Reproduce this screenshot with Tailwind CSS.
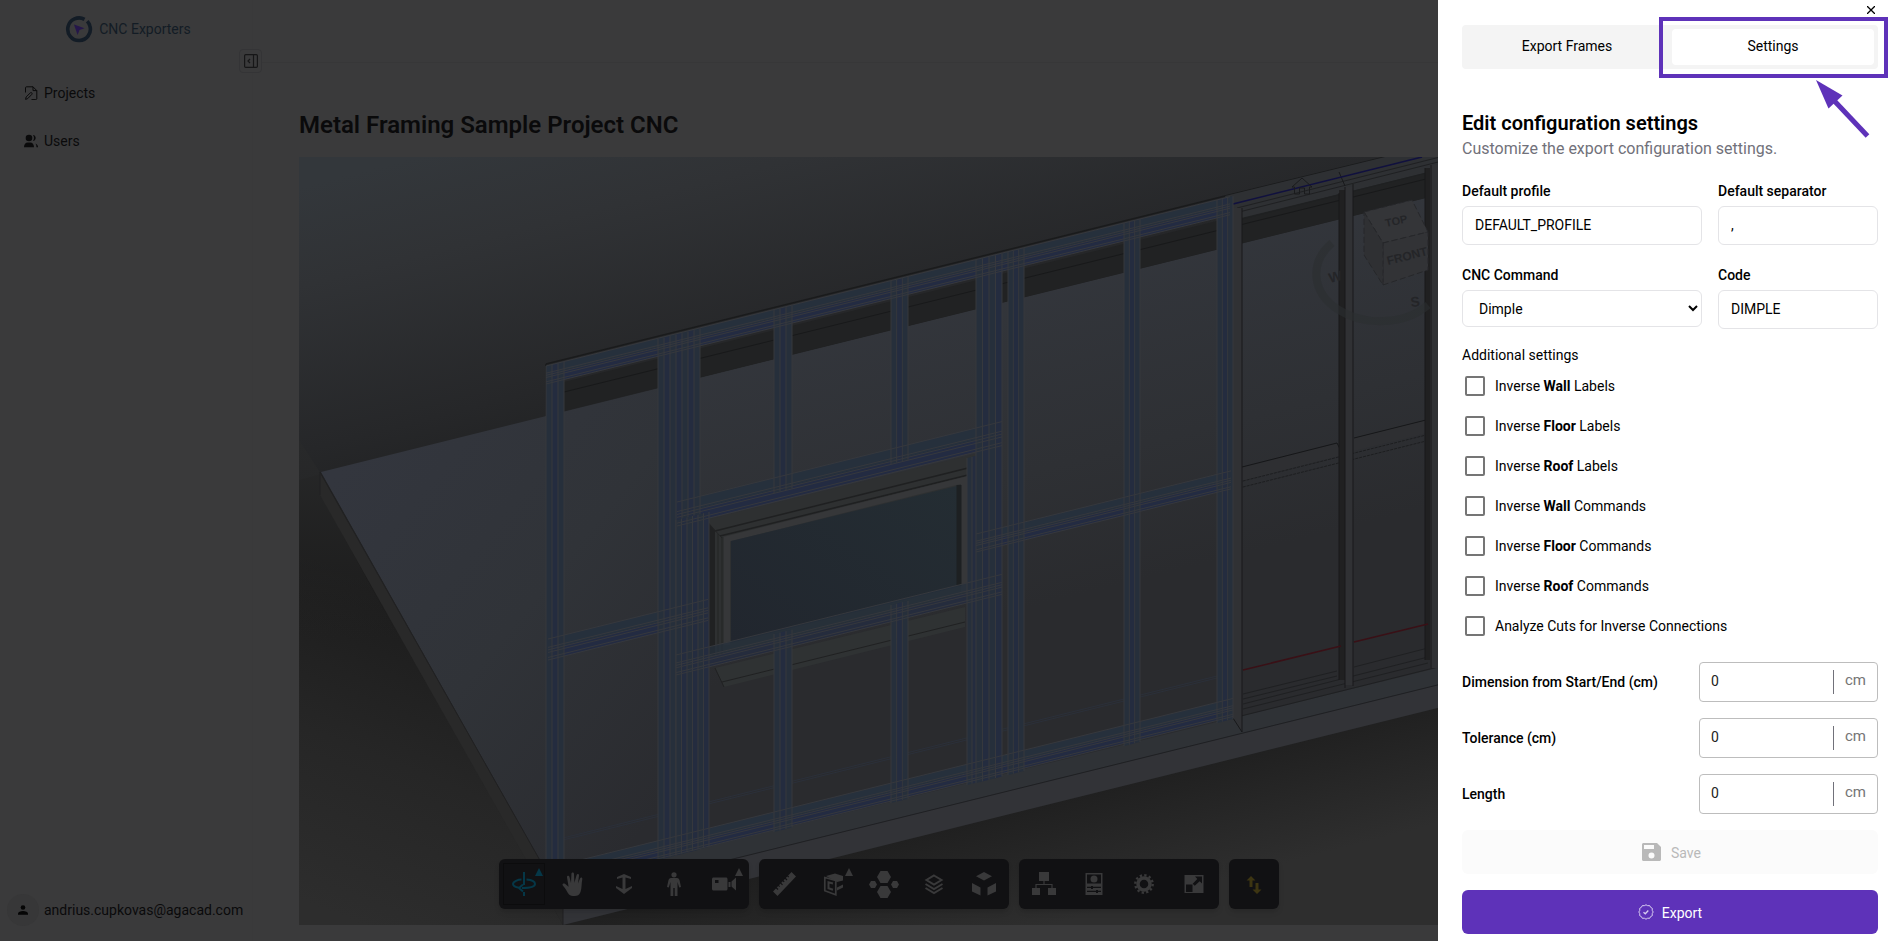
<!DOCTYPE html>
<html lang="en">
  <head>
    <meta charset="UTF-8" />
    <meta name="viewport" content="width=device-width, initial-scale=1.0" />
    <title>CNC Exporters</title>
    <script src="https://cdn.jsdelivr.net/npm/@tailwindcss/browser@4"></script>
  </head>
  <body class="bg-[#3a3a3b] font-[Roboto,sans-serif] text-sm text-[#0a0a0b]">
    <div class="flex h-screen overflow-hidden">
      <!-- Sidebar -->
      <aside class="relative flex w-[253px] shrink-0 flex-col border-r border-[#39393a]">
        <a href="#" class="flex h-[57px] items-center justify-center gap-1.5 pl-1 text-[#131c25]">
          <svg class="size-7" viewBox="0 0 28 28" fill="none">
            <path d="M19.500 4.300A11.300 11.300 0 1 0 24.900 11M22.200 6.200a11.300 11.300 0 0 1 2.700 4.800" stroke="#131c26" stroke-width="3.600" />
            <path d="M9 9.500l10.500 3.800-5 1.800-1.900 5z" fill="#25164a" />
          </svg>
          CNC Exporters
        </a>
        <button aria-label="Collapse sidebar" class="absolute top-[49px] -right-[10px] flex h-6 w-[23px] items-center justify-center rounded-sm border border-[#343436] bg-[#3a3a3b]">
          <svg class="size-3.5" viewBox="0 0 14 14" fill="none" stroke="#161617" stroke-width="1.200">
            <rect x="0.600" y="0.600" width="12.800" height="12.800" rx="1.200" />
            <path d="M9.500 1v12M6 5L4 7l2 2" />
          </svg>
        </button>
        <nav class="mt-3 flex flex-col">
          <a href="#" class="flex h-12 items-center gap-1.5 pl-6">
            <svg class="size-3.5" viewBox="0 0 14 14" fill="none" stroke="#0a0a0b">
              <path d="M1.500 6.500V1.800c0-.6.4-1 1-1H9l3.800 3.800v8c0 .6-.4 1-1 1H7.500M9 .8v3.800h3.800M1.600 13.400l.5-2.400 4.300-4.200c1-.8 2.300.4 1.500 1.500l-4.200 4.300z" />
            </svg>
            Projects
          </a>
          <a href="#" class="flex h-12 items-center gap-1.5 pl-6">
            <svg class="size-3.5" viewBox="0 0 14 14" fill="#0a0a0b">
              <circle cx="5" cy="4" r="3.300" />
              <path d="M0 13.300c0-3 1.600-4.800 3.800-4.800h2.400c2.200 0 3.800 1.800 3.800 4.800zM9 1c3.600.3 3.600 5.700 0 6 1.300-1.700 1.300-4.300 0-6zM11.500 9.500c1.600.7 2.500 2 2.500 3.800h-1.500c0-1.500-.3-2.700-1-3.800z" />
            </svg>
            Users
          </a>
        </nav>
        <div class="mt-auto mb-[15px] flex items-center gap-[5px] pl-[7px]">
          <span class="flex size-8 items-center justify-center rounded-full bg-[#373738]">
            <svg class="size-2.5" viewBox="0 0 10 10" fill="#050505">
              <circle cx="5" cy="2.500" r="2.300" />
              <path d="M0 9.800V8.500C0 7 2.500 6 5 6s5 1 5 2.500v1.300z" />
            </svg>
          </span>
          <span>andrius.cupkovas@agacad.com</span>
        </div>
      </aside>

      <main class="flex min-w-0 flex-1 flex-col">
        <div class="h-[63px] shrink-0 border-b border-[#373738]"></div>
        <h1 class="pt-[46px] pb-4 pl-[46px] text-2xl leading-8 font-semibold">Metal Framing Sample Project CNC</h1>

        <!-- 3D viewer -->
        <section class="relative mb-4 ml-[46px] min-h-0 max-w-[1179px] flex-1 overflow-hidden bg-[#262728]">
          <svg class="block h-full w-full" viewBox="299 157 1179 768" preserveAspectRatio="xMinYMin slice">
            <defs>
              <linearGradient id="sky" gradientUnits="userSpaceOnUse" x1="560" y1="120" x2="640" y2="430">
                <stop offset="0" stop-color="#33373b" />
                <stop offset="0.3" stop-color="#303235" />
                <stop offset="0.8" stop-color="#262729" />
                <stop offset="1" stop-color="#212223" />
              </linearGradient>
              <linearGradient id="ground" gradientUnits="userSpaceOnUse" x1="420" y1="600" x2="300" y2="900">
                <stop offset="0" stop-color="#1c1c1c" />
                <stop offset="0.500" stop-color="#262626" />
                <stop offset="1" stop-color="#2d2d2d" />
              </linearGradient>
              <linearGradient id="fade" x1="0" y1="0" x2="0" y2="1">
                <stop offset="0" stop-color="#28292a" />
                <stop offset="1" stop-color="#242424" stop-opacity="0" />
              </linearGradient>
              <linearGradient id="ground2" gradientUnits="userSpaceOnUse" x1="1000" y1="815" x2="1030" y2="930">
                <stop offset="0" stop-color="#202020" />
                <stop offset="1" stop-color="#2e2e2e" />
              </linearGradient>
              <linearGradient id="slab" gradientUnits="userSpaceOnUse" x1="340" y1="470" x2="700" y2="760">
                <stop offset="0" stop-color="#33363e" />
                <stop offset="0.500" stop-color="#303338" />
                <stop offset="1" stop-color="#2a2b2f" />
              </linearGradient>
              <linearGradient id="slab2" gradientUnits="userSpaceOnUse" x1="900" y1="300" x2="980" y2="620">
                <stop offset="0" stop-color="#33363c" />
                <stop offset="0.600" stop-color="#2e3034" />
                <stop offset="1" stop-color="#2a2b2e" />
              </linearGradient>
              <linearGradient id="glass" x1="0" y1="1" x2="1" y2="0">
                <stop offset="0" stop-color="#21262e" />
                <stop offset="1" stop-color="#242d33" />
              </linearGradient>
            </defs>

            <rect x="299" y="157" width="1179" height="768" fill="url(#sky)" />
            <path d="M299 480L321 474V495L563 925H299z" fill="url(#ground)" />
            <path d="M299 440L321 474V495L400 640H299z" fill="url(#fade)" />
            <path d="M563 925L1478 698V925z" fill="url(#ground2)" />
            <!-- slab -->
            <path d="M321 472L1478 185V680L563 901z" fill="url(#slab)" />
            <path d="M700 378L1478 185V680L700 868z" fill="url(#slab2)" />
            <path d="M563 882L1233 718L1478 658V675L563 901z" fill="#2f3236" />
            <path d="M563 901L1478 675V698L563 925z" fill="#323337" />
            <path d="M320 473V495L563 925V901z" fill="#292929" />
            <path d="M563 901L1478 675" stroke="#1f2023" fill="none" />
            <path d="M320 495V472L563 901V925" stroke="#212122" fill="none" />
            <!-- strip between the top chord and the slab -->
            <path d="M564 382L1225 219L1430 168V197L564 411z" fill="#212223" />
            <path d="M564 392L1430 178" stroke="#18191a" fill="none" />
            <path d="M546 364L1225 196L1385 157M546 364V416" stroke="#1a1b1c" stroke-width="1.500" fill="none" />

            <!-- window -->
            <path d="M709 519L975 454V600L709 663z" fill="#2e3031" />
            <path d="M709 523L715 530V655H709z" fill="#202122" />
            <path d="M715 531L968 468M720 536L968 475" stroke="#1f2021" stroke-width="1.500" fill="none" />
            <path d="M709 524L722 538M718 534V655M722 537V655" stroke="#232425" fill="none" />
            <path d="M727 645V539L964 480V592" stroke="#363739" stroke-width="6" fill="none" />
            <path d="M731 541L961 485V586L731 643z" fill="url(#glass)" />
            <path d="M959 485V586" stroke="#1d2022" stroke-width="5" />
            <path d="M715 668L965 607V627L724 687z" fill="#2f3233" />
            <path d="M722 682L965 622M715 668L724 687" stroke="#202122" fill="none" />

            <!-- unselected frames on the right -->
            <path d="M1225 196L1385 157H1478V160L1233 220z" fill="#2e3033" />
            <path d="M1235 213L1478 152M1237 208L1460 152M1242 219L1478 160" stroke="#1f2022" fill="none" />
            <path d="M1242 467L1337 443L1343 455L1242 481zM1354 438L1426 420L1432 432L1354 451z" fill="#2e2f32" />
            <path d="M1242 467L1337 443L1343 455M1354 438L1426 420L1432 432" stroke="#161719" fill="none" />
            <path d="M1235 483L1478 422M1235 489L1478 428" stroke="#1d1e20" stroke-dasharray="3 1" fill="none" />
            <path d="M1243 694L1337 671M1354 667L1428 648M1243 699L1337 676M1243 704L1428 657M1243 709L1428 663M1233 718L1478 657" stroke="#1f2022" fill="none" />
            <path d="M1233 208H1242V732L1233 718z" fill="#303134" />
            <path d="M1339 190H1345V680H1339zM1425 168H1430V660H1425z" fill="#202021" />
            <path d="M1345 187H1353V685H1345zM1430 165H1478V668H1430z" fill="#303134" />
            <path d="M1242 208V732M1233 718L1242 732M1339 193V680M1345 187V688M1353 184V686M1425 168V660M1431 165V668M1339 172L1345 186" stroke="#18191b" fill="none" />
            <path d="M1233 204L1422 157" stroke="#10103f" stroke-width="1.500" />
            <path d="M1243 670L1341 646M1354 642L1428 624" stroke="#3a1016" stroke-width="1.500" />

            <!-- selected frame, filled in by the script below -->
            <g id="frame"></g>

            <!-- view cube -->
            <path d="M1332 243A62 46 0 0 0 1428 305" stroke="#2c2e31" stroke-width="8" stroke-opacity="0.600" fill="none" />
            <g stroke="#26272a" stroke-dasharray="6 3">
              <path d="M1364 212L1412 200L1428 232L1383 243z" fill="#343538" />
              <path d="M1383 243L1428 232V270L1383 285z" fill="#323336" />
              <path d="M1364 212L1383 243V285L1364 255z" fill="#2f3033" />
            </g>
            <g fill="#242528" font-family="Liberation Sans, sans-serif" font-weight="bold">
              <text transform="translate(1386 227) rotate(-12)" font-size="11">TOP</text>
              <text transform="translate(1388 265) rotate(-14)" font-size="12">FRONT</text>
              <text transform="translate(1330 283) rotate(-14)" font-size="14">W</text>
              <text transform="translate(1411 307) rotate(-6)" font-size="14">S</text>
            </g>
            <path d="M1302 178l10 9h-2.500v7h-5v-6h-5v6h-5v-7h-2.500z" stroke="#1a1b1d" fill="none" />
          </svg>

          <!-- Viewer toolbar -->
          <div class="absolute inset-x-0 bottom-4 flex justify-center gap-2.5 text-[#39393a]">
            <div class="flex rounded-md bg-[#111113] shadow-md">
              <button aria-label="Orbit" class="relative flex size-[50px] items-center justify-center text-[#053747]">
                <span class="absolute inset-1 border border-[#0c0c0d]"></span>
                <svg class="size-6" viewBox="0 0 24 24" fill="none" stroke="currentColor" stroke-width="2">
                  <path d="M12 0v13M12 20v4M7 15.800C3 15 1 13.500 1 12c0-2.500 5-4.500 8.500-4.500M14.500 7.500C19 7.800 23 9.500 23 12s-5 4-13 4M11 12.500l-4 3.500 4 3.500" />
                </svg>
                <svg class="absolute top-[9px] right-[6px] size-2" viewBox="0 0 8 8"><path d="M4 0l4 8H0z" fill="currentColor" /></svg>
              </button>
              <button aria-label="Pan" class="flex size-[50px] items-center justify-center">
                <svg class="size-6" viewBox="0 0 24 24" fill="currentColor">
                  <path d="M7 22.500C5 20 3.500 16 .8 13.400c-1-1.400.7-2.600 2.200-1.600l3.600 3L5 5.500c-.3-1.900 2-2.300 2.500-.5L9 11l.4-9c.1-1.900 2.500-1.900 2.600 0l.4 8.800L14.600 3c.4-1.700 2.600-1.300 2.400.5L16 11.500l2-5c.7-1.600 2.600-.9 2.300.7-1 4.800-.3 8.800-1.800 12.800-1.200 3.200-3 4-6 4-2.300 0-4.200-.2-5.500-1.500z" />
                </svg>
              </button>
              <button aria-label="Zoom" class="flex size-[50px] items-center justify-center">
                <svg class="size-6" viewBox="0 0 24 24" fill="currentColor">
                  <path d="M12 2l7 3v2L13.500 5.500v11.500L20 14v2l-8 6-8-6v-2l6.500 3V5.500L5 7V5z" />
                </svg>
              </button>
              <button aria-label="First person" class="flex size-[50px] items-center justify-center">
                <svg class="size-6" viewBox="0 0 24 24" fill="currentColor">
                  <circle cx="12" cy="2.800" r="2.600" />
                  <path d="M9 6h6c1.500 0 2.200 1 2.600 2.400L19 15l-1.800.5L15.500 10v14h-2.800v-8h-1.400v8H8.500V10l-1.700 5.500L5 15l1.400-6.600C6.800 7 7.500 6 9 6z" />
                </svg>
              </button>
              <button aria-label="Camera" class="relative flex size-[50px] items-center justify-center">
                <svg class="size-6" viewBox="0 0 24 24">
                  <path d="M1.500 5.500h12.500c.8 0 1.500.7 1.500 1.500v10c0 .8-.7 1.500-1.500 1.500H1.500C.7 18.500 0 17.800 0 17V7c0-.8.7-1.500 1.500-1.500zM16.500 10h2v5h-2zM19.500 9.500L24 5.500v13l-4.500-4z" fill="currentColor" />
                  <path d="M3 8h3.500v3H3z" fill="#111113" />
                </svg>
                <svg class="absolute top-[9px] right-[6px] size-2" viewBox="0 0 8 8"><path d="M4 0l4 8H0z" fill="currentColor" /></svg>
              </button>
            </div>
            <div class="flex rounded-md bg-[#111113] shadow-md">
              <button aria-label="Measure" class="flex size-[50px] items-center justify-center">
                <svg class="size-6" viewBox="0 0 24 24">
                  <path d="M19.500 0L24 4.500 5.500 24 1 19.500z" fill="currentColor" />
                  <path d="M4 15.500l2 2M6.200 13.200l1.400 1.400M8.500 10.800l2 2M10.800 8.500l1.400 1.400M13 6l2 2M15.300 3.700l1.400 1.400" stroke="#111113" stroke-width="1.200" />
                </svg>
              </button>
              <button aria-label="Section" class="relative flex size-[50px] items-center justify-center">
                <svg class="size-6" viewBox="0 0 24 24" fill="none" stroke="currentColor" stroke-width="1.700">
                  <path d="M2.800 5.500l11 3v14.200l-11-4z" />
                  <path d="M11 11.500l-4.500-1.200v6l4.500 1.500" stroke-width="2" />
                  <path d="M4 4l9-2.500L21 4v4.500L15 10zM15 15.500l6-3v3l-6 3z" fill="currentColor" stroke="none" />
                </svg>
                <svg class="absolute top-[9px] right-[6px] size-2" viewBox="0 0 8 8"><path d="M4 0l4 8H0z" fill="currentColor" /></svg>
              </button>
              <button aria-label="Explode" class="flex size-[50px] items-center justify-center">
                <svg class="h-7 w-8" viewBox="0 0 32 28" fill="currentColor">
                  <path d="M12.500 1h7l3.500 6-3.500 6h-7L9 7zM12.500 16h7l3.500 6-3.500 6h-7L9 22zM3 11h4l2 3.500L7 18H3l-2-3.500zM25 11h4l2 3.500-2 3.500h-4l-2-3.500z" />
                </svg>
              </button>
              <button aria-label="Layers" class="flex size-[50px] items-center justify-center">
                <svg class="size-6" viewBox="0 0 24 24" fill="none" stroke="currentColor" stroke-width="2">
                  <path d="M12 3.500l7.500 4.500L12 12.500 4.500 8zM3.500 12l8.500 5 8.500-5M3.500 16l8.500 5 8.500-5" />
                </svg>
              </button>
              <button aria-label="Model browser" class="flex size-[50px] items-center justify-center">
                <svg class="size-6" viewBox="0 0 24 24" fill="currentColor">
                  <path d="M12 0l8 4.200-8 4.200-8-4.200zM0 11l8.500 4.500v8L0 19.500zM24 11l-8.500 4.500v8L24 19.500z" />
                </svg>
              </button>
            </div>
            <div class="flex rounded-md bg-[#111113] shadow-md">
              <button aria-label="Structure" class="flex size-[50px] items-center justify-center">
                <svg class="size-6" viewBox="0 0 24 24">
                  <path d="M7 0h10v9H7zM0 16h8v7H0zM16 16h8v7h-8z" fill="currentColor" />
                  <path d="M12 9v3.500M4 16v-3.500h16V16" fill="none" stroke="currentColor" stroke-width="1.200" />
                </svg>
              </button>
              <button aria-label="Properties" class="flex size-[50px] items-center justify-center">
                <svg class="size-6" viewBox="0 0 24 24">
                  <path d="M3.500 1h17v22h-17z" fill="currentColor" />
                  <path d="M5 2.500h14v9H5z" fill="#111113" />
                  <path d="M5 15.300h14M5 19.300h14" stroke="#111113" stroke-width="1.200" />
                  <circle cx="12" cy="7" r="3.500" fill="currentColor" />
                  <path d="M10 14v3M15 18v3" stroke="#111113" stroke-width="2" />
                </svg>
              </button>
              <button aria-label="Viewer settings" class="flex size-[50px] items-center justify-center">
                <svg class="size-6" viewBox="0 0 24 24" fill="none" stroke="currentColor">
                  <circle cx="12" cy="12" r="6" stroke-width="3.500" />
                  <circle cx="12" cy="12" r="8.700" stroke-width="2.400" stroke-dasharray="2.300 2.255" />
                </svg>
              </button>
              <button aria-label="Fullscreen" class="flex size-[50px] items-center justify-center">
                <svg class="size-6" viewBox="0 0 24 24">
                  <path d="M2.500 3h19v18h-19z" fill="currentColor" />
                  <path d="M4 12.500h6.500V20H4zM13 4.500h7v7l-2.300-2.300-5 4.500-2-2 4.600-4.800z" fill="#111113" />
                </svg>
              </button>
            </div>
            <div class="flex rounded-md bg-[#111113] shadow-md">
              <button aria-label="Swap" class="flex size-[50px] items-center justify-center text-[#3d3512]">
                <svg class="size-5" viewBox="0 0 20 20" fill="currentColor">
                  <path d="M7 2l4.500 4.500h-3V13h-3V6.500h-3zM13 20l-4.500-4.500h3V9h3v6.500h3z" />
                </svg>
              </button>
            </div>
          </div>
        </section>
      </main>
    </div>

    <!-- Export drawer -->
    <aside class="fixed inset-y-0 right-0 w-[464px] overflow-hidden bg-white px-6 pt-[25px] text-black">
      <button aria-label="Close" class="absolute top-1 right-[25px] flex size-3 items-center justify-center">
        <svg class="size-2" viewBox="0 0 8 8" fill="none" stroke="#000" stroke-width="1.300"><path d="M0 0l8 8M8 0L0 8" /></svg>
      </button>
      <div role="tablist" class="grid h-11 grid-cols-2 gap-1 rounded bg-[#f4f4f4] p-1">
        <button role="tab" aria-selected="false" class="rounded pb-0.5">Export Frames</button>
        <button role="tab" aria-selected="true" class="rounded bg-white pb-0.5">Settings</button>
      </div>

      <!-- Callout -->
      <div class="pointer-events-none absolute top-[17px] right-[14px] h-[61px] w-[229px] border-4 border-[#5e32b9]"></div>
      <svg class="pointer-events-none absolute top-[79px] right-[32px] h-[60px] w-[56px]" viewBox="0 0 56 60">
        <path d="M2 1l26.500 15.500-14 13z" fill="#5e32b9" />
        <path d="M20 21.500L53.500 57" stroke="#5e32b9" stroke-width="5" />
      </svg>

      <form>
        <h2 class="mt-10 text-xl leading-7 font-semibold">Edit configuration settings</h2>
        <p class="text-base leading-6 text-[#71717a]">Customize the export configuration settings.</p>

        <div class="mt-5 grid grid-cols-[3fr_2fr] items-start gap-x-4 gap-y-5">
          <div class="flex flex-col gap-[5px]">
            <label for="profile" class="leading-5 font-medium">Default profile</label>
            <input id="profile" type="text" value="DEFAULT_PROFILE" class="h-[39px] w-full rounded-md border border-[#e4e4e7] px-3 pb-0.5" />
          </div>
          <div class="flex flex-col gap-[5px]">
            <label for="separator" class="leading-5 font-medium">Default separator</label>
            <input id="separator" type="text" value="," class="h-[39px] w-full rounded-md border border-[#e4e4e7] px-3 pb-0.5" />
          </div>
          <div class="flex flex-col gap-[5px]">
            <label for="command" class="leading-5 font-medium">CNC Command</label>
            <select id="command" class="h-[37px] w-full rounded-md border border-[#e4e4e7] bg-white pr-px pl-3">
              <option>Dimple</option>
            </select>
          </div>
          <div class="flex flex-col gap-[5px]">
            <label for="code" class="leading-5 font-medium">Code</label>
            <input id="code" type="text" value="DIMPLE" class="h-[39px] w-full rounded-md border border-[#e4e4e7] px-3 pb-0.5" />
          </div>
        </div>

        <fieldset class="mt-4">
          <legend class="leading-5">Additional settings</legend>
          <label class="mt-px flex h-10 items-center pl-[3px]">
            <input type="checkbox" class="mr-2.5 size-5 appearance-none rounded-xs border-2 border-[#757575]" />
            <span>Inverse <b>Wall</b> Labels</span>
          </label>
          <label class="flex h-10 items-center pl-[3px]">
            <input type="checkbox" class="mr-2.5 size-5 appearance-none rounded-xs border-2 border-[#757575]" />
            <span>Inverse <b>Floor</b> Labels</span>
          </label>
          <label class="flex h-10 items-center pl-[3px]">
            <input type="checkbox" class="mr-2.5 size-5 appearance-none rounded-xs border-2 border-[#757575]" />
            <span>Inverse <b>Roof</b> Labels</span>
          </label>
          <label class="flex h-10 items-center pl-[3px]">
            <input type="checkbox" class="mr-2.5 size-5 appearance-none rounded-xs border-2 border-[#757575]" />
            <span>Inverse <b>Wall</b> Commands</span>
          </label>
          <label class="flex h-10 items-center pl-[3px]">
            <input type="checkbox" class="mr-2.5 size-5 appearance-none rounded-xs border-2 border-[#757575]" />
            <span>Inverse <b>Floor</b> Commands</span>
          </label>
          <label class="flex h-10 items-center pl-[3px]">
            <input type="checkbox" class="mr-2.5 size-5 appearance-none rounded-xs border-2 border-[#757575]" />
            <span>Inverse <b>Roof</b> Commands</span>
          </label>
          <label class="flex h-10 items-center pl-[3px]">
            <input type="checkbox" class="mr-2.5 size-5 appearance-none rounded-xs border-2 border-[#757575]" />
            <span>Analyze Cuts for Inverse Connections</span>
          </label>
        </fieldset>

        <div class="mt-4 flex flex-col gap-4">
          <div class="flex items-center justify-between">
            <label for="dimension" class="font-medium">Dimension from Start/End (cm)</label>
            <div class="flex h-10 w-[179px] items-center rounded border border-[#bdbdbd] pr-[11px]">
              <input id="dimension" type="text" value="0" class="w-full min-w-0 flex-1 pb-0.5 pl-[11px] text-[#212121]" />
              <span class="flex h-6 items-center border-l border-[#71717a] pb-0.5 pl-[11px] text-[15px] text-[#757575]">cm</span>
            </div>
          </div>
          <div class="flex items-center justify-between">
            <label for="tolerance" class="font-medium">Tolerance (cm)</label>
            <div class="flex h-10 w-[179px] items-center rounded border border-[#bdbdbd] pr-[11px]">
              <input id="tolerance" type="text" value="0" class="w-full min-w-0 flex-1 pb-0.5 pl-[11px] text-[#212121]" />
              <span class="flex h-6 items-center border-l border-[#71717a] pb-0.5 pl-[11px] text-[15px] text-[#757575]">cm</span>
            </div>
          </div>
          <div class="flex items-center justify-between">
            <label for="length" class="font-medium">Length</label>
            <div class="flex h-10 w-[179px] items-center rounded border border-[#bdbdbd] pr-[11px]">
              <input id="length" type="text" value="0" class="w-full min-w-0 flex-1 pb-0.5 pl-[11px] text-[#212121]" />
              <span class="flex h-6 items-center border-l border-[#71717a] pb-0.5 pl-[11px] text-[15px] text-[#757575]">cm</span>
            </div>
          </div>

          <button type="button" disabled class="flex h-11 items-center justify-center gap-2 rounded-md bg-[#fbfbfb] text-[#b9b9b9]">
            <svg class="size-6" viewBox="0 0 24 24" fill="currentColor">
              <path fill-rule="evenodd" d="M4.500 3H18l4 4v12.500c0 .8-.7 1.500-1.500 1.500h-16C3.700 21 3 20.300 3 19.500v-15C3 3.700 3.700 3 4.500 3zM5 5v4h10V5zM12.500 12.500a3 3 0 1 0 0 6 3 3 0 0 0 0-6z" />
            </svg>
            <span class="pt-0.5">Save</span>
          </button>
          <button type="button" class="flex h-11 items-center justify-center gap-2 rounded-md bg-[#5e32b9] text-white">
            <svg class="size-4" viewBox="0 0 16 16" fill="none" stroke="#d8cdf0">
              <path d="M8 .8l1.700.9 2-.1.900 1.700 1.700 1-.1 2L15.200 8l-1 1.700.1 2-1.700.9-.9 1.700-2-.1-1.700 1-1.700-1-2 .1-.9-1.700-1.700-.9.100-2L.8 8l1-1.700-.1-2 1.700-1 .9-1.700 2 .1z" />
              <path d="M5.500 8.200l1.800 1.600 3-3.300" stroke-width="1.300" />
            </svg>
            <span class="pt-0.5">Export</span>
          </button>
        </div>
      </form>
    </aside>

    <script>
      const frame = document.getElementById("frame");
      const SLOPE = -0.2475;

      function add(d, fill, stroke, opacity) {
        const p = document.createElementNS("http://www.w3.org/2000/svg", "path");
        p.setAttribute("d", d);
        p.setAttribute("fill", fill);
        p.setAttribute("fill-opacity", opacity || 1);
        if (stroke) p.setAttribute("stroke", stroke);
        frame.appendChild(p);
      }

      // vertical member between two x positions
      function stud(x1, x2, top, bottom) {
        const dy = (x2 - x1) * SLOPE;
        const step = (x2 - x1) / Math.max(1, Math.round((x2 - x1) / 6));
        let lines = "";
        let i = 0;
        for (let x = x1; x < x2 - 1; x += step) {
          const y1 = top + (x - x1) * SLOPE;
          const y2 = bottom + (x - x1) * SLOPE;
          add(
            `M${x} ${y1}L${x + step} ${y1 + step * SLOPE}V${y2 + step * SLOPE}L${x} ${y2}z`,
            i++ % 2 ? "#242c3f" : "#262f3b"
          );
          lines += `M${x} ${y1}V${y2}`;
        }
        lines += `M${x2} ${top + dy}V${bottom + dy}`;
        add(lines, "none", "#36383d");
      }

      // sloped member: x1, x2, y at x1, thickness, fill opacity
      function bandFill([x1, x2, y, t, opacity]) {
        const dy = (x2 - x1) * SLOPE;
        add(`M${x1} ${y}L${x2} ${y + dy}v${t / 2}L${x1} ${y + t / 2}z`, "#26303c", null, opacity);
        add(`M${x1} ${y + t / 2}L${x2} ${y + dy + t / 2}v${t / 2}L${x1} ${y + t}z`, "#232b42", null, opacity);
      }

      function bandLines([x1, x2, y, t]) {
        const dy = (x2 - x1) * SLOPE;
        let lines = "";
        [0, t * 0.4, t * 0.52, t * 0.64, t * 0.88, t].forEach((o) => {
          lines += `M${x1} ${y + o}L${x2} ${y + dy + o}`;
        });
        add(lines, "none", "#36383d");
      }

      // chords, headers and sill
      const bands = [
        [546, 1230, 366, 18, 1],
        [677, 1002, 502, 24, 1],
        [676, 1002, 655, 20, 0.75],
        [548, 708, 639, 21, 1],
        [976, 1231, 534, 18, 1],
        [556, 1233, 866, 18, 1],
      ];

      // service line
      add("M563 838L1217 676M563 840L1217 678", "none", "#2b303a");

      bands.forEach(bandFill);

      // studs
      stud(546, 564, 366, 886);
      stud(658, 700, 339, 860);
      stud(676, 709, 520, 855);
      stud(774, 792, 310, 493);
      stud(774, 792, 634, 832);
      stud(891, 908, 281, 464);
      stud(891, 908, 605, 803);
      stud(967, 977, 458, 785);
      stud(976, 1002, 260, 783);
      stud(1008, 1024, 252, 775);
      stud(1124, 1140, 223, 746);
      stud(1217, 1233, 200, 723);

      bands.forEach(bandLines);
    </script>
  </body>
</html>
